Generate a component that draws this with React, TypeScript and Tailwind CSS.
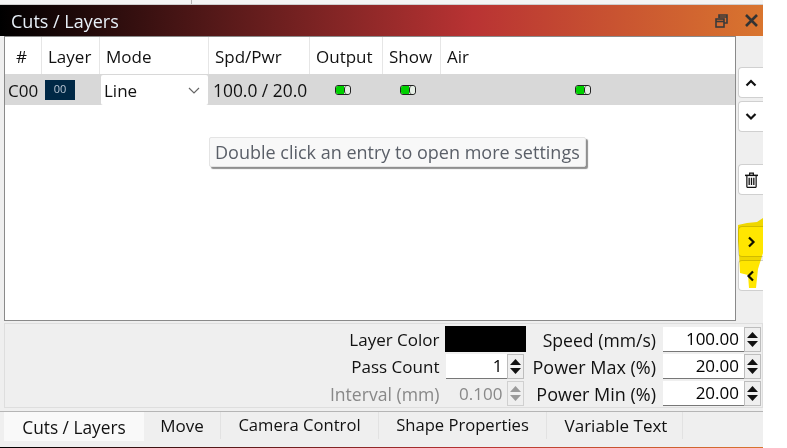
import React from "react";

const font = { fontFamily: '"Open Sans", "Noto Sans", sans-serif' };

function Toggle() {
  return (
    <span className="flex h-[10px] w-[16px] rounded-[3px] border border-[#222] overflow-hidden bg-[#e8efe8]">
      <span className="h-full w-[8px] bg-[#00d000]" />
      <span className="h-full flex-1 rounded-[3px] border-l border-[#222] bg-[#e6efe6]" />
    </span>
  );
}

function Chevron({ d }: { d: string }) {
  return (
    <svg width="12" height="12" viewBox="0 0 12 12" fill="none">
      <path d={d} stroke="#111" strokeWidth="2.2" />
    </svg>
  );
}

function SideButton({ children }: { children: React.ReactNode }) {
  return (
    <div className="flex h-[31px] w-[25px] items-center justify-center rounded-l-[4px] border border-r-0 border-[#d0d0d0] bg-white">
      {children}
    </div>
  );
}

function Spin({ disabled }: { disabled?: boolean }) {
  const c = disabled ? "#9a9a9a" : "#111";
  return (
    <div className={`flex h-[25px] w-[17px] shrink-0 flex-col items-center justify-center gap-[3px] border ${disabled ? "border-[#d0d0d0]" : "border-[#bdbdbd]"} bg-[#efefef]`}>
      <svg width="11" height="6" viewBox="0 0 11 6"><path d="M5.5 0 11 6H0z" fill={c} /></svg>
      <svg width="11" height="6" viewBox="0 0 11 6"><path d="M5.5 6 11 0H0z" fill={c} /></svg>
    </div>
  );
}

function SpinBox({ value, disabled, w }: { value: string; disabled?: boolean; w: string }) {
  return (
    <div className="mt-[1px] flex h-[25px] items-center">
      <div className={`flex h-[25px] ${w} items-center justify-end pr-[5px] ${disabled ? "bg-[#efefef] text-[#888]" : "border-b border-[#777] bg-white text-black"}`}>
        {value}
      </div>
      <Spin disabled={disabled} />
    </div>
  );
}

const headers = ["#", "Layer", "Mode", "Spd/Pwr", "Output", "Show", "Air"];
const headerPad = ["pl-[11px]", "pl-[6px]", "pl-[6px]", "pl-[6px]", "pl-[6px]", "pl-[6px]", "pl-[6px]"];
const tabs = [
  { label: "Move", cls: "w-[77px]" },
  { label: "Camera Control", cls: "w-[158px] text-[16.6px]" },
  { label: "Shape Properties", cls: "w-[168px] text-[16.6px]" },
  { label: "Variable Text", cls: "w-[136px] pl-[3px]" },
];

export default function App() {
  return (
    <div className="h-[448px] w-[787px] overflow-hidden bg-white text-[17px] text-[#111]" style={font}>
      <div className="w-[763px]">
        <div className="flex h-[5px] border-b border-[#cfcfcf] bg-[#f4f4f4]">
          <div className="h-full w-[192px] border-r border-[#b5b5b5]" />
        </div>

        <div className="flex h-[31px] items-center justify-between bg-[linear-gradient(90deg,#000_0%,#5a1a1a_30%,#b93333_62%,#d9752f_100%)] pl-[11px] pr-[5px]">
          <span className="pt-[2px] text-[18px] text-[#e8f0f8]">Cuts / Layers</span>
          <div className="flex items-center gap-[17px]">
            <svg width="13" height="14" viewBox="0 0 13 14" fill="none" stroke="#3a3a3a" strokeWidth="1.6">
              <rect x="1" y="5" width="8" height="8" />
              <path d="M1 7.5h8" />
              <path d="M4 4V1h8v8h-3M4 3h8" />
            </svg>
            <svg width="13" height="13" viewBox="0 0 13 13" stroke="#333" strokeWidth="2.6">
              <path d="M1 1l11 11M12 1 1 12" />
            </svg>
          </div>
        </div>

        <div className="bg-[#efefef]">
          <div className="flex">
            <div className="ml-[4px] h-[285px] w-[732px] border border-[#8a8a8a] bg-white">
              <div className="relative h-full">
                <div className="grid h-[37px] grid-cols-[37px_58px_109px_101px_73px_58px_1fr] items-center">
                  {headers.map((h, i) => (
                    <div key={h} className={`flex h-full items-center border-[#e6e6e6] pt-[2px] ${headerPad[i]} ${i < 6 ? "border-r" : ""}`}>
                      {h}
                    </div>
                  ))}
                </div>
                <div className="grid h-[31px] grid-cols-[37px_58px_109px_101px_73px_58px_1fr] items-center bg-[#d8d8d8]">
                  <div className="pl-[3px] pt-[2px]">C00</div>
                  <div className="pl-[3px]">
                    <div className="flex h-[20px] w-[30px] items-center justify-center bg-[#002845] text-[11px] text-[#b9c6d4]">00</div>
                  </div>
                  <div className="ml-[1px] flex h-[30px] w-[107px] items-center justify-between rounded-[2px] bg-white pl-[3px] pr-[8px] pt-[2px]">
                    Line
                    <svg width="12" height="8" viewBox="0 0 12 8" fill="none" stroke="#666" strokeWidth="1.2">
                      <path d="M1 1l5 5 5-5" />
                    </svg>
                  </div>
                  <div className="pl-[4px] pt-[2px] text-[17.4px]">100.0 / 20.0</div>
                  <div className="flex justify-center pr-[8px]"><Toggle /></div>
                  <div className="flex justify-center pr-[9px]"><Toggle /></div>
                  <div className="pl-[134px]"><Toggle /></div>
                </div>
                <div className="absolute left-[204px] top-[100px] flex h-[30px] items-center rounded-[2px] border border-[#e4e4e4] bg-[#f8f8f8] px-[5px] pt-[1px] text-[18px] text-[#5a5f68] shadow-[2px_2px_1px_#8f8f8f]">
                  Double click an entry to open more settings
                </div>
              </div>
            </div>

            <div className="relative ml-[2px] flex flex-1 flex-col">
              <div className="mt-[31px] flex flex-col gap-[3px]">
                <SideButton><Chevron d="M1.5 8.5 6 4l4.5 4.5" /></SideButton>
                <SideButton><Chevron d="M1.5 3 6 7.5 10.5 3" /></SideButton>
              </div>
              <div className="mt-[32px]">
                <SideButton>
                  <svg width="13" height="16" viewBox="0 0 14 17" fill="none" stroke="#111">
                    <path d="M0 3.5h14" strokeWidth="1.6" />
                    <path d="M5 3V1h4v2" strokeWidth="1.3" />
                    <path d="M2 4v11.5a1 1 0 0 0 1 1h8a1 1 0 0 0 1-1V4" strokeWidth="1.3" />
                    <path d="M4.5 6v8M7 6v8M9.5 6v8" strokeWidth="1.4" />
                  </svg>
                </SideButton>
              </div>
              <div className="mt-[31px] flex flex-col gap-[3px]">
                <SideButton><Chevron d="M4 1.5 8.5 6 4 10.5" /></SideButton>
                <SideButton><Chevron d="M8 1.5 3.5 6 8 10.5" /></SideButton>
              </div>
              <svg className="absolute left-[-1px] top-[181px] mix-blend-multiply" width="27" height="72" viewBox="0 0 27 72">
                <path d="M1 8 10 6 20 5 26 1V36L21 52 19 71H12L11 58 3 56 2 36 1 24z" fill="#ffe600" />
              </svg>
            </div>
          </div>

          <div className="ml-[4px] mt-[2px] flex h-[85px] justify-end border border-[#dedede] pr-[1px] pt-[2px]">
            <div className="grid grid-cols-[auto_93px_auto_98px] grid-rows-[26px_26px_26px] items-center gap-y-[1px]">
              <div className="pt-[2px] text-right">Layer Color</div>
              <div className="ml-[6px] h-[26px] w-[81px] bg-black" />
              <div className="pr-[7px] pt-[2px] text-right text-[17.6px]">Speed (mm/s)</div>
              <SpinBox w="w-[81px]" value="100.00" />

              <div className="pt-[2px] text-right">Pass Count</div>
              <div className="ml-[7px]"><SpinBox w="w-[61px]" value="1" /></div>
              <div className="pr-[7px] pt-[2px] text-right text-[18px]">Power Max (%)</div>
              <SpinBox w="w-[81px]" value="20.00" />

              <div className="pt-[2px] text-right text-[17.6px] text-[#888]">Interval (mm)</div>
              <div className="ml-[7px]"><SpinBox disabled w="w-[61px]" value="0.100" /></div>
              <div className="pr-[7px] pt-[2px] text-right text-[18px]">Power Min (%)</div>
              <SpinBox w="w-[81px]" value="20.00" />
            </div>
          </div>

          <div className="mt-[3px] flex h-[36px] items-start border-t border-[#b5b5b5]">
            <div className="ml-[4px] flex h-[29px] w-[140px] items-center justify-center bg-[#f9f9f9] pt-[2px] text-[17.3px]">Cuts / Layers</div>
            {tabs.map((t) => (
              <div key={t.label} className={`flex h-[27px] items-center justify-center border-r border-[#e2e2e2] ${t.cls}`}>
                {t.label}
              </div>
            ))}
          </div>
        </div>
        <div className="h-px bg-[linear-gradient(90deg,#000_0%,#5a1a1a_30%,#b93333_62%,#d9752f_100%)]" />
      </div>
    </div>
  );
}
